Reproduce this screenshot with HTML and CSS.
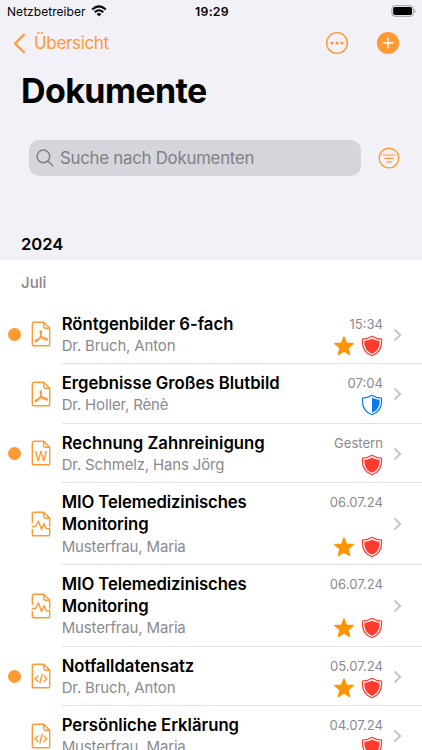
FILE: index.html
```html
<!DOCTYPE html>
<html lang="de">
<head>
<meta charset="utf-8">
<title>Dokumente</title>
<link rel="stylesheet" href="styles.css">
</head>
<body>
<svg class="sprite" aria-hidden="true">
  <symbol id="star" viewBox="0 0 22 22"><path d="M11 2.2 L13.3 8.3 L20 8.6 L14.8 12.8 L16.5 19.3 L11 15.8 L5.5 19.3 L7.2 12.8 L2 8.6 L8.7 8.3 Z" fill="#ff9500" stroke="#ff9500" stroke-width="1.6" stroke-linejoin="round"/></symbol>
  <symbol id="shield" viewBox="0 0 22 22"><path d="M11 1.3 C8.4 3 5 4 1.5 4.2 C.8 11.5 3.5 18 11 20.7 C18.5 18 21.2 11.5 20.5 4.2 C17 4 13.6 3 11 1.3Z" fill="#fff" stroke="#ff3b30" stroke-width="1.2" stroke-linejoin="round"/><path d="M11 3.4 C8.8 4.7 6.2 5.5 3.4 5.8 C3.1 11.8 5.1 16.4 11 18.7 C16.9 16.4 18.9 11.8 18.6 5.8 C15.8 5.5 13.2 4.7 11 3.4Z" fill="#ff3b30"/></symbol>
  <symbol id="shield-half" viewBox="0 0 22 22"><path d="M11 1.3 C8.4 3 5 4 1.5 4.2 C.8 11.5 3.5 18 11 20.7 C18.5 18 21.2 11.5 20.5 4.2 C17 4 13.6 3 11 1.3Z" fill="#fff" stroke="#087aef" stroke-width="1.2" stroke-linejoin="round"/><path d="M11 3.4 V18.7 C16.9 16.4 18.9 11.8 18.6 5.8 C15.8 5.5 13.2 4.7 11 3.4Z" fill="#087aef"/></symbol>
  <symbol id="chevron" viewBox="0 0 9 14"><path d="M1.5 1.5 7.3 7 1.5 12.5" fill="none" stroke="#c4c4c7" stroke-width="1.8"/></symbol>
  <symbol id="page" viewBox="0 0 20 26"><path d="M12.7 1.2 H3.2 Q1.3 1.2 1.3 3.1 V22.9 Q1.3 24.8 3.2 24.8 H16.8 Q18.7 24.8 18.7 22.9 V7.2 L12.7 1.2 V5.5 Q12.7 7.2 14.4 7.2 H18.7"/></symbol>
  <symbol id="pdf" viewBox="0 0 20 26"><use href="#page"/><path d="M9.9 10 C8.5 10 9.2 12.7 10.3 14.5 C11.5 17 13.5 19 15.4 19 C16.9 19 16.5 17.2 14.6 16.9 C11.5 16.4 7.5 17.4 5.5 18.5 C3.4 19.8 4.1 21.4 5.4 20.4 C7.3 19.1 9.7 15 10.3 12.5 C10.6 11 10.7 10 9.9 10Z" stroke-width="1.3"/></symbol>
  <symbol id="code" viewBox="0 0 20 26"><use href="#page"/><path d="M7 13 4.2 15.7 7 18.4 M13 13 15.8 15.7 13 18.4 M11.1 11.5 8.9 19.7" stroke-width="1.4"/></symbol>
  <symbol id="pulse" viewBox="0 0 20 26"><path d="M1.3 11.5 V3.1 Q1.3 1.2 3.2 1.2 H12.7 L18.7 7.2 V15.5 M12.7 1.2 V5.5 Q12.7 7.2 14.4 7.2 H18.7 M1.3 18.5 V22.9 Q1.3 24.8 3.2 24.8 H16.8 Q18.7 24.8 18.7 22.9 V17.6 H15.2 L13 12.5 10.5 18.6 7.5 10 4.5 15.5 H1.3"/></symbol>
</svg>
<header class="top">
  <div class="status">
    <div class="carrier"><span>Netzbetreiber</span>
      <svg width="16" height="12" viewBox="0 0 16 12" fill="none" stroke="#000" stroke-width="2"><path d="M1.2 4.5 Q8-1.8 14.8 4.5 M3.7 7.2 Q8 3.2 12.3 7.2"/><path d="M8 11.4 5.7 9.1 Q8 7 10.3 9.1Z" fill="#000" stroke="none"/></svg>
    </div>
    <span class="clock">19:29</span>
    <svg class="battery" width="26" height="12" viewBox="0 0 26 12"><rect x=".9" y=".7" width="21.4" height="10.6" rx="3" fill="none" stroke="#9d9da1"/><rect x="2.2" y="2" width="18.8" height="8" rx="1.7"/><path d="M23.5 4 Q26 6 23.5 8Z" fill="#9d9da1"/></svg>
  </div>
  <nav class="nav">
    <a class="back"><svg width="13" height="21" viewBox="0 0 13 21"><path d="M11 1.7 2 10.5 11 19.3" fill="none" stroke="#ff9933" stroke-width="2.3" stroke-linecap="round" stroke-linejoin="round"/></svg><span>Übersicht</span></a>
    <div class="actions">
      <svg width="24" height="24" viewBox="0 0 24 24" fill="#ff9933"><circle cx="12" cy="12" r="10.4" fill="none" stroke="#ff9933" stroke-width="1.4"/><circle cx="7" cy="12" r="1.55"/><circle cx="12" cy="12" r="1.55"/><circle cx="17" cy="12" r="1.55"/></svg>
      <svg width="24" height="24" viewBox="0 0 24 24"><circle cx="12" cy="12" r="11.1" fill="#ff9933"/><path d="M12 7.2V16.8M7.2 12H16.8" stroke="#fff" stroke-width="1.4" stroke-linecap="round"/></svg>
    </div>
  </nav>
  <h1>Dokumente</h1>
  <div class="search-row">
    <div class="search"><svg width="18" height="18" viewBox="0 0 18 18" fill="none" stroke="#808085" stroke-width="1.5" stroke-linecap="round"><circle cx="7.4" cy="7.4" r="6.3"/><path d="M12 12 16.7 16.7"/></svg><span>Suche nach Dokumenten</span></div>
    <svg width="22" height="22" viewBox="0 0 22 22" fill="none" stroke="#ff9933" stroke-width="1.35" stroke-linecap="round"><circle cx="11" cy="11" r="9.8"/><path d="M5.2 8H16.8M6.9 11.4H15.1M8.6 14.8H13.4" stroke-width="1.2"/></svg>
  </div>
  <h2>2024</h2>
</header>
<main>
  <h3>Juli</h3>
  <ul class="list">
    <li class="row"><i class="dot"></i><svg class="doc"><use href="#pdf"/></svg>
      <div class="body"><div class="text"><b>Röntgenbilder 6-fach</b><span>Dr. Bruch, Anton</span></div>
      <div class="meta"><time>15:34</time><div class="marks"><svg><use href="#star"/></svg><svg><use href="#shield"/></svg></div></div><svg class="chev"><use href="#chevron"/></svg></div></li>
    <li class="row"><i></i><svg class="doc"><use href="#pdf"/></svg>
      <div class="body"><div class="text"><b>Ergebnisse Großes Blutbild</b><span>Dr. Holler, Rènè</span></div>
      <div class="meta"><time>07:04</time><div class="marks"><svg><use href="#shield-half"/></svg></div></div><svg class="chev"><use href="#chevron"/></svg></div></li>
    <li class="row"><i class="dot"></i><svg class="doc" viewBox="0 0 20 26"><use href="#page" width="20" height="26"/><text x="10" y="20.6" text-anchor="middle">W</text></svg>
      <div class="body"><div class="text"><b>Rechnung Zahnreinigung</b><span>Dr. Schmelz, Hans Jörg</span></div>
      <div class="meta"><time>Gestern</time><div class="marks"><svg><use href="#shield"/></svg></div></div><svg class="chev"><use href="#chevron"/></svg></div></li>
    <li class="row"><i></i><svg class="doc"><use href="#pulse"/></svg>
      <div class="body"><div class="text"><b class="mio">MIO Telemedizinisches<br>Monitoring</b><span>Musterfrau, Maria</span></div>
      <div class="meta"><time>06.07.24</time><div class="marks"><svg><use href="#star"/></svg><svg><use href="#shield"/></svg></div></div><svg class="chev"><use href="#chevron"/></svg></div></li>
    <li class="row"><i></i><svg class="doc"><use href="#pulse"/></svg>
      <div class="body"><div class="text"><b class="mio">MIO Telemedizinisches<br>Monitoring</b><span>Musterfrau, Maria</span></div>
      <div class="meta"><time>06.07.24</time><div class="marks"><svg><use href="#star"/></svg><svg><use href="#shield"/></svg></div></div><svg class="chev"><use href="#chevron"/></svg></div></li>
    <li class="row"><i class="dot"></i><svg class="doc"><use href="#code"/></svg>
      <div class="body"><div class="text"><b>Notfalldatensatz</b><span>Dr. Bruch, Anton</span></div>
      <div class="meta"><time>05.07.24</time><div class="marks"><svg><use href="#star"/></svg><svg><use href="#shield"/></svg></div></div><svg class="chev"><use href="#chevron"/></svg></div></li>
    <li class="row"><i></i><svg class="doc"><use href="#code"/></svg>
      <div class="body"><div class="text"><b>Persönliche Erklärung</b><span>Musterfrau, Maria</span></div>
      <div class="meta"><time>04.07.24</time><div class="marks"><svg><use href="#shield"/></svg></div></div><svg class="chev"><use href="#chevron"/></svg></div></li>
  </ul>
</main>
</body>
</html>
```
FILE: styles.css
```css
* { box-sizing: border-box; margin: 0; padding: 0; }
html, body { height: 750px; overflow: hidden; }
body { background: #fff; color: #000; font-family: Inter, "Liberation Sans", sans-serif; white-space: nowrap; }
svg { display: block; flex: none; }
.sprite { width: 0; height: 0; position: absolute; }
.top { height: 260px; background: #f2f1f7; display: flex; flex-direction: column; }
.status { height: 22px; display: grid; grid-template-columns: 1fr auto 1fr; align-items: center; padding: 0 5px 0 7px; font-size: 12px; }
.carrier { display: flex; align-items: center; gap: 5px; }
.carrier span { letter-spacing: .05px; }
.carrier svg { margin-top: -1px; }
.clock { font-weight: 600; font-size: 12.3px; letter-spacing: .3px; }
.battery { justify-self: end; margin-top: -1px; }
.nav { height: 42px; display: flex; align-items: center; justify-content: space-between; padding: 0 22px 0 13px; }
.back { display: flex; align-items: center; gap: 8px; color: #ff9933; font-size: 17px; letter-spacing: -.33px; }
.actions { display: flex; gap: 27px; }
h1 { font-size: 34px; line-height: 42px; font-weight: 700; letter-spacing: -.6px; padding-left: 21px; margin-top: 6px; }
.search-row { display: flex; align-items: center; gap: 17px; padding-left: 29px; margin-top: 28px; }
.search { width: 332px; height: 36px; border-radius: 10px; background: #d6d5db; display: flex; align-items: center; gap: 6px; padding-left: 7px; color: #808085; font-size: 16.8px; letter-spacing: -.23px; }
h2 { font-size: 16.6px; line-height: 22px; font-weight: 600; margin: 57px 0 0 21px; }
h3 { font-size: 15px; line-height: 20px; font-weight: 500; color: #85858a; padding: 13px 0 0 21px; height: 44.7px; }
.list { list-style: none; }
.row { display: grid; grid-template-columns: 13px 20px 1fr; column-gap: 9px; align-items: center; padding-left: 8px; }
.dot { width: 13px; height: 13px; border-radius: 50%; background: #ff9933; }
.doc { width: 20px; height: 26px; margin-left: .5px; fill: none; stroke: #ff9933; stroke-width: 1.4; stroke-linejoin: round; stroke-linecap: round; }
.doc text { font-size: 12.5px; font-weight: 500; fill: #ff9933; stroke: none; }
.body { display: flex; align-items: center; margin-left: 2.7px; padding: 8px 20px 6.2px 0; border-bottom: 1px solid #e2e2e4; }
.text { flex: 1; display: flex; flex-direction: column; }
.text b { font-size: 16.7px; line-height: 22.2px; font-weight: 600; }
.text .mio { letter-spacing: -.1px; }
.text span { font-size: 15px; line-height: 22.1px; letter-spacing: -.16px; color: #8a8a8e; }
.meta { align-self: stretch; display: flex; flex-direction: column; justify-content: space-between; align-items: flex-end; color: #8a8a8e; font-size: 13.1px; }
.meta time { line-height: 22px; }
.marks { display: flex; gap: 6.5px; }
.marks svg { width: 22px; height: 22px; }
.chev { width: 9px; height: 14px; margin-left: 10px; }
```
